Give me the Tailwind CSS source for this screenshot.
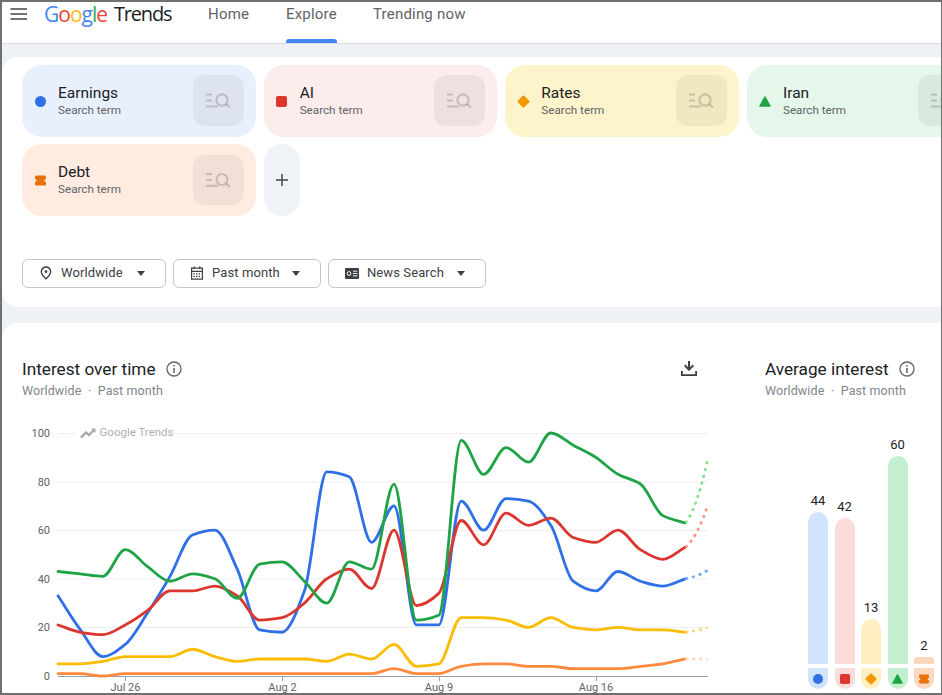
<!DOCTYPE html>
<html lang="en">
<head>
  <meta charset="UTF-8" />
  <title>Explore | Google Trends</title>
  <script src="https://cdn.jsdelivr.net/npm/@tailwindcss/browser@4"></script>
</head>
<body class="bg-white font-['Roboto',sans-serif]">
  <!-- shared icons -->
  <svg class="hidden">
    <symbol id="termIcon" viewBox="0 0 51 51">
      <g fill="none" stroke="#000" stroke-opacity="0.16" stroke-width="2.2">
        <path d="M13 19.5h6M13 25.5h6M13 31.5h12" />
        <circle cx="29" cy="25" r="5.6" />
        <path d="M33 29l4 3.5" />
      </g>
    </symbol>
    <symbol id="dot" viewBox="0 0 11 11"><circle cx="5.5" cy="5.5" r="5.5" fill="#2f6fe8" /></symbol>
    <symbol id="square" viewBox="0 0 11 11"><rect width="11" height="11" rx="2" fill="#dc362e" /></symbol>
    <symbol id="diamond" viewBox="0 0 13 13"><rect x="1.9" y="1.9" width="9.2" height="9.2" rx="1.5" fill="#f29900" transform="rotate(45 6.5 6.5)" /></symbol>
    <symbol id="triangle" viewBox="0 0 12 11"><path d="M6 1L11 10H1z" fill="#1ea446" stroke="#1ea446" stroke-width="1.5" stroke-linejoin="round" /></symbol>
    <symbol id="debt" viewBox="0 0 11 11"><path d="M1.5 .5h8A1.5 1.5 0 0 1 11 2v2a1.5 1.5 0 0 0 0 3v2a1.5 1.5 0 0 1-1.5 1.5h-8A1.5 1.5 0 0 1 0 9V7a1.5 1.5 0 0 0 0-3V2A1.5 1.5 0 0 1 1.5 .5z" fill="#e8710a" /></symbol>
  </svg>

  <div class="w-[942px] h-[695px] overflow-hidden border-t-2 border-l-2 border-r border-b-2 border-[#707070] bg-[#eef1f6]">
    <!-- Header -->
    <header class="h-[42px] bg-white border-b border-[#dadce0] flex items-start">
      <svg class="w-[18px] h-[14px] ml-[8px] mt-[5px] shrink-0" viewBox="0 0 18 14">
        <path d="M.5 2h16.5M.5 7h16.5M.5 12h16.5" stroke="#444" stroke-width="1.7" />
      </svg>
      <div class="ml-[16px] mt-[-2px] w-[142px] h-[28px] flex text-[21px] leading-[28px] font-medium font-['Open_Sans',sans-serif] whitespace-nowrap">
        <span class="tracking-[-1px] w-[70px]"><span class="text-[#4285f4]">G</span><span class="text-[#ea4335]">o</span><span class="text-[#fbbc04]">o</span><span class="text-[#4285f4]">g</span><span class="text-[#34a853]">l</span><span class="text-[#ea4335]">e</span></span>
        <span class="text-[#202124] text-[20px] tracking-[-1.2px] font-normal">Trends</span>
      </div>
      <nav class="flex ml-[22px] text-[15px] leading-[24px] text-[#5f6368] tracking-[0.2px]">
        <a class="w-[78px]">Home</a>
        <a class="relative w-[87px] h-[41px]">Explore
          <span class="absolute left-0 bottom-0 w-[51px] h-[4px] bg-[#4285f4] rounded-t-[3px]"></span>
        </a>
        <a>Trending now</a>
      </nav>
    </header>

    <!-- Terms and filters -->
    <section class="mt-[13px] h-[250px] bg-white rounded-l-[16px] pl-5 pt-2">
      <div class="flex gap-2 w-[1000px]">
        <div class="w-[233.67px] h-[72px] shrink-0 rounded-[20px] bg-[#e9f0fd] flex items-center pl-[13px] pr-3">
          <svg class="w-[11px] h-[11px] shrink-0"><use href="#dot" /></svg>
          <div class="ml-[12px] flex-1 pb-[2px]">
            <div class="text-[15.5px] leading-[20px] text-[#202124]">Earnings</div>
            <div class="text-[11.7px] leading-[15px] text-[#5f6368]">Search term</div>
          </div>
          <div class="w-[51px] h-[51px] mb-[1px] rounded-[12px] bg-black/5"><svg class="w-[51px] h-[51px]"><use href="#termIcon" /></svg></div>
        </div>
        <div class="w-[233.67px] h-[72px] shrink-0 rounded-[20px] bg-[#fcecec] flex items-center pl-[12px] pr-3">
          <svg class="w-[11px] h-[11px] shrink-0"><use href="#square" /></svg>
          <div class="ml-[13px] flex-1 pb-[2px]">
            <div class="text-[15.5px] leading-[20px] text-[#202124]">AI</div>
            <div class="text-[11.7px] leading-[15px] text-[#5f6368]">Search term</div>
          </div>
          <div class="w-[51px] h-[51px] mb-[1px] rounded-[12px] bg-black/5"><svg class="w-[51px] h-[51px]"><use href="#termIcon" /></svg></div>
        </div>
        <div class="w-[233.67px] h-[72px] shrink-0 rounded-[20px] bg-[#fef4cb] flex items-center pl-[12px] pr-3">
          <svg class="w-[13px] h-[13px] shrink-0"><use href="#diamond" /></svg>
          <div class="ml-[11px] flex-1 pb-[2px]">
            <div class="text-[15.5px] leading-[20px] text-[#202124]">Rates</div>
            <div class="text-[11.7px] leading-[15px] text-[#5f6368]">Search term</div>
          </div>
          <div class="w-[51px] h-[51px] mb-[1px] rounded-[12px] bg-black/5"><svg class="w-[51px] h-[51px]"><use href="#termIcon" /></svg></div>
        </div>
        <div class="w-[233.67px] h-[72px] shrink-0 rounded-[20px] bg-[#e5f6eb] flex items-center pl-[12px] pr-3">
          <svg class="w-[12px] h-[11px] shrink-0"><use href="#triangle" /></svg>
          <div class="ml-[12px] flex-1 pb-[2px]">
            <div class="text-[15.5px] leading-[20px] text-[#202124]">Iran</div>
            <div class="text-[11.7px] leading-[15px] text-[#5f6368]">Search term</div>
          </div>
          <div class="w-[51px] h-[51px] mb-[1px] rounded-[12px] bg-black/5"><svg class="w-[51px] h-[51px]"><use href="#termIcon" /></svg></div>
        </div>
      </div>
      <div class="flex gap-2 mt-[7px]">
        <div class="w-[233.67px] h-[72px] shrink-0 rounded-[20px] bg-[#feece1] flex items-center pl-[13px] pr-3">
          <svg class="w-[11px] h-[11px] shrink-0"><use href="#debt" /></svg>
          <div class="ml-[12px] flex-1 pb-[2px]">
            <div class="text-[15.5px] leading-[20px] text-[#202124]">Debt</div>
            <div class="text-[11.7px] leading-[15px] text-[#5f6368]">Search term</div>
          </div>
          <div class="w-[51px] h-[50px] rounded-[12px] bg-black/5"><svg class="w-[51px] h-[50px]"><use href="#termIcon" /></svg></div>
        </div>
        <button class="w-9 h-[72px] rounded-[18px] bg-[#eff2f7] flex items-center justify-center">
          <svg class="w-3 h-3" viewBox="0 0 12 12"><path d="M6 0v12M0 6h12" stroke="#444746" stroke-width="1.5" /></svg>
        </button>
      </div>
      <div class="flex gap-[7px] mt-[43px]">
        <button class="w-[144px] h-[29px] pb-[1px] rounded-[6px] border border-[#c4c7c5] flex items-center pl-[15px] text-[13px] text-[#3c4043] tracking-[0.1px]">
          <svg class="w-[16px] h-[16px] mr-[7px]" viewBox="0 0 24 24"><path fill="#3c4043" d="M12 12c-1.1 0-2-.9-2-2s.9-2 2-2 2 .9 2 2-.9 2-2 2zm6-1.8C18 6.57 15.35 4 12 4s-6 2.57-6 6.2c0 2.34 1.95 5.44 6 9.14 4.05-3.7 6-6.8 6-9.14zM12 2c4.2 0 8 3.22 8 8.2 0 3.32-2.67 7.25-8 11.8-5.33-4.55-8-8.48-8-11.8C4 5.22 7.8 2 12 2z" /></svg>
          Worldwide
          <svg class="w-[8px] h-[5px] ml-[14px]" viewBox="0 0 8 5"><path d="M0 0h8L4 5z" fill="#3c4043" /></svg>
        </button>
        <button class="w-[148px] h-[29px] pb-[1px] rounded-[6px] border border-[#c4c7c5] flex items-center pl-[15px] text-[13px] text-[#3c4043] tracking-[0.1px]">
          <svg class="w-[16px] h-[16px] mr-[7px]" viewBox="0 0 16 16"><path fill="none" stroke="#3c4043" stroke-width="1.2" d="M2.6 3.2h10.8v11H2.6zM2.6 6.4h10.8" /><path stroke="#3c4043" stroke-width="1.4" d="M5.2 1.4v2.4M10.8 1.4v2.4" /><path stroke="#3c4043" stroke-width="1.2" stroke-dasharray="1.4 1.2" d="M4.4 8.8h7.4M4.4 11.4h7.4" /></svg>
          Past month
          <svg class="w-[8px] h-[5px] ml-[12px]" viewBox="0 0 8 5"><path d="M0 0h8L4 5z" fill="#3c4043" /></svg>
        </button>
        <button class="w-[158px] h-[29px] pb-[1px] rounded-[6px] border border-[#c4c7c5] flex items-center pl-[16px] text-[13px] text-[#3c4043] tracking-[0.1px]">
          <svg class="w-[14px] h-[11px] mr-[8px]" viewBox="0 0 14 11"><rect width="14" height="11" rx="1" fill="#3c4043" /><circle cx="4" cy="5.5" r="1.9" fill="none" stroke="#fff" stroke-width="1" /><path d="M8 3.2h4.4M8 5.5h4.4M8 7.8h4.4" stroke="#fff" stroke-width="0.9" /></svg>
          News Search
          <svg class="w-[8px] h-[5px] ml-[13px]" viewBox="0 0 8 5"><path d="M0 0h8L4 5z" fill="#3c4043" /></svg>
        </button>
      </div>
    </section>

    <!-- Charts -->
    <section class="mt-4 h-[380px] bg-white rounded-l-[16px] flex">
      <div class="w-[763px] shrink-0 pl-5 pt-[34px]">
        <div class="w-[679px] flex items-start justify-between">
          <div>
            <div class="flex items-center">
              <h2 class="text-[17.2px] leading-[24px] text-[#202124]">Interest over time</h2>
              <svg class="w-[18px] h-[18px] ml-[9px]" viewBox="0 0 18 18"><circle cx="9" cy="9" r="7" fill="none" stroke="#5f6368" stroke-width="1.3" /><path d="M9 8v5M9 5v1.6" stroke="#5f6368" stroke-width="1.5" /></svg>
            </div>
            <div class="text-[12.5px] leading-[20px] text-[#80868b] tracking-[0.1px]">Worldwide<span class="mx-[6.5px]">·</span>Past month</div>
          </div>
          <svg class="w-6 h-6 mt-[-1px]" viewBox="0 0 24 24"><path fill="#3c4043" d="M4 15h1.8v3.2h12.4V15H20v5H4zM11 5h2v6.2l2.6-2.6 1.4 1.4-5 5-5-5 1.4-1.4 2.6 2.6z" /></svg>
        </div>
        <svg class="block mt-[14px]" width="700" height="278" viewBox="22 415 700 278">
          <!-- grid -->
          <g class="stroke-[#eeeeee]" stroke-width="1">
            <path d="M58 433.5h18M177 433.5h531M58 482h650M58 530.5h650M58 579h650M58 627.5h650" />
          </g>
          <g class="fill-[#5f6368] text-[11px]" text-anchor="end">
            <text x="50" y="437">100</text>
            <text x="50" y="486">80</text>
            <text x="50" y="534">60</text>
            <text x="50" y="583">40</text>
            <text x="50" y="631">20</text>
            <text x="50" y="680">0</text>
          </g>
          <path d="M81 437.5l5-5 3 2.5 5-5" fill="none" class="stroke-[#a8a8a8]" stroke-width="2.4" />
          <path d="M91 428.5h4.5v4.5z" class="fill-[#a8a8a8]" />
          <text x="99.5" y="436" class="fill-[#b0b0b0] text-[11.5px]">Google Trends</text>
          <path d="M58 676.5h650" class="stroke-[#9aa0a6]" stroke-width="1" />
          <path d="M125.5 677v4M282.5 677v4M439.5 677v4M596.5 677v4" class="stroke-[#9aa0a6]" stroke-width="1" />
          <g class="fill-[#5f6368] text-[11px]" text-anchor="middle">
            <text x="125.5" y="691">Jul 26</text>
            <text x="282.5" y="691">Aug 2</text>
            <text x="439" y="691">Aug 9</text>
            <text x="596" y="691">Aug 16</text>
          </g>
          <g fill="none" stroke-width="2.8" stroke-linejoin="round" stroke-linecap="round">
            <path id="l-blue" class="stroke-[#2f6fe8]" />
            <path id="l-red" class="stroke-[#dc362e]" />
            <path id="l-yellow" class="stroke-[#fbbc04]" />
            <path id="l-green" class="stroke-[#1ea446]" />
            <path id="l-orange" class="stroke-[#ff8a3d]" />
          </g>
          <g fill="none" stroke-width="2.6" stroke-dasharray="3 4">
            <path id="d-blue" class="stroke-[#7aa7f7]" />
            <path id="d-red" class="stroke-[#fb8f89]" />
            <path id="d-yellow" class="stroke-[#fdd663]" />
            <path id="d-green" class="stroke-[#81e08f]" />
            <path id="d-orange" class="stroke-[#fed3b8]" />
          </g>
        </svg>
      </div>

      <div class="pt-[34px] flex-1">
        <div class="flex items-center">
          <h2 class="text-[17.2px] leading-[24px] text-[#202124]">Average interest</h2>
          <svg class="w-[18px] h-[18px] ml-[9px]" viewBox="0 0 18 18"><circle cx="9" cy="9" r="7" fill="none" stroke="#5f6368" stroke-width="1.3" /><path d="M9 8v5M9 5v1.6" stroke="#5f6368" stroke-width="1.5" /></svg>
        </div>
        <div class="text-[12.5px] leading-[20px] text-[#80868b] tracking-[0.1px] whitespace-nowrap">Worldwide<span class="mx-[6.5px]">·</span>Past month</div>
        <div class="ml-[43px] mt-[18px] h-[245px] flex items-end gap-[6.5px]">
          <div class="w-5 flex flex-col items-center"><span class="text-[13px] leading-[16px] text-[#202124] mb-[3px]">44</span><div class="w-5 h-[152px] rounded-t-[10px] bg-[#d2e3fc]"></div></div>
          <div class="w-5 flex flex-col items-center"><span class="text-[13px] leading-[16px] text-[#202124] mb-[3px]">42</span><div class="w-5 h-[146px] rounded-t-[10px] bg-[#fadcd9]"></div></div>
          <div class="w-5 flex flex-col items-center"><span class="text-[13px] leading-[16px] text-[#202124] mb-[3px]">13</span><div class="w-5 h-[45px] rounded-t-[10px] bg-[#feefc3]"></div></div>
          <div class="w-5 flex flex-col items-center"><span class="text-[13px] leading-[16px] text-[#202124] mb-[3px]">60</span><div class="w-5 h-[208px] rounded-t-[10px] bg-[#c4eed0]"></div></div>
          <div class="w-5 flex flex-col items-center"><span class="text-[13px] leading-[16px] text-[#202124] mb-[3px]">2</span><div class="w-5 h-[7px] rounded-t-[3px] bg-[#fed7bf]"></div></div>
        </div>
        <div class="ml-[43px] mt-1 flex gap-[6.5px]">
          <div class="w-5 h-[21px] rounded-b-[10px] bg-[#d2e3fc] flex items-center justify-center"><svg class="w-[10px] h-[10px]"><use href="#dot" /></svg></div>
          <div class="w-5 h-[21px] rounded-b-[10px] bg-[#fadcd9] flex items-center justify-center"><svg class="w-[10px] h-[10px]"><use href="#square" /></svg></div>
          <div class="w-5 h-[21px] rounded-b-[10px] bg-[#feefc3] flex items-center justify-center"><svg class="w-[12px] h-[12px]"><use href="#diamond" /></svg></div>
          <div class="w-5 h-[21px] rounded-b-[10px] bg-[#c4eed0] flex items-center justify-center"><svg class="w-[11px] h-[10px]"><use href="#triangle" /></svg></div>
          <div class="w-5 h-[21px] rounded-b-[10px] bg-[#fed7bf] flex items-center justify-center"><svg class="w-[10px] h-[10px]"><use href="#debt" /></svg></div>
        </div>
      </div>
    </section>
  </div>

  <script>
    // daily values, last point is the dashed forecast
    const series = {
      blue: [33,19,8,13,26,41,58,60,44,19,18,35,84,82,55,70,21,21,72,60,73,72,62,39,35,43,39,37,40,43.5],
      red: [21,18,17,21,27,35,35,37,33,23,24,30,40,44,36,60,29,34,64,54,67,62,65,57,55,60,52,48,53,70],
      yellow: [5,5,6,8,8,8,11,8,6,7,7,7,6,9,7,13,4,5,24,24,23,20,24,20,19,20,19,19,18,20],
      green: [43,42,41,52,45,39,42,40,32,46,47,39,30,47,44,79,23,25,97,83,94,88,100,95,90,83,79,66,63,89],
      orange: [1,1,0,1,1,1,1,1,1,1,1,1,1,1,1,3,1,1,4,5,5,4,4,3,3,3,4,5,7,7]
    };
    const xAt = i => 58 + i * 22.4;
    const yAt = v => 676 - v * 2.43;

    // monotone cubic, same shape the chart uses: flat at peaks, no overshoot
    function curve(values) {
      const n = values.length;
      const slopes = [];
      for (let i = 0; i < n; i++) {
        const a = i > 0 ? (values[i] - values[i - 1]) : null;
        const b = i < n - 1 ? (values[i + 1] - values[i]) : null;
        if (a === null) slopes.push(b);
        else if (b === null) slopes.push(a);
        else if (a * b <= 0) slopes.push(0);
        else slopes.push(2 * a * b / (a + b));
      }
      let d = `M${xAt(0)} ${yAt(values[0])}`;
      for (let i = 0; i < n - 1; i++) {
        const x0 = xAt(i), x1 = xAt(i + 1), dx = (x1 - x0) / 3;
        d += `C${x0 + dx} ${yAt(values[i] + slopes[i] / 3)} ${x1 - dx} ${yAt(values[i + 1] - slopes[i + 1] / 3)} ${x1} ${yAt(values[i + 1])}`;
      }
      return d;
    }

    Object.keys(series).forEach(name => {
      const v = series[name];
      const a = v[28], b = v[29];
      document.getElementById('l-' + name).setAttribute('d', curve(v.slice(0, 29)));
      // forecast bends upward out of the last real point
      document.getElementById('d-' + name).setAttribute('d',
        `M${xAt(28)} ${yAt(a)}Q${xAt(28.5)} ${yAt(a + (b - a) * 0.2)} ${xAt(29)} ${yAt(b)}`);
    });
  </script>
</body>
</html>
